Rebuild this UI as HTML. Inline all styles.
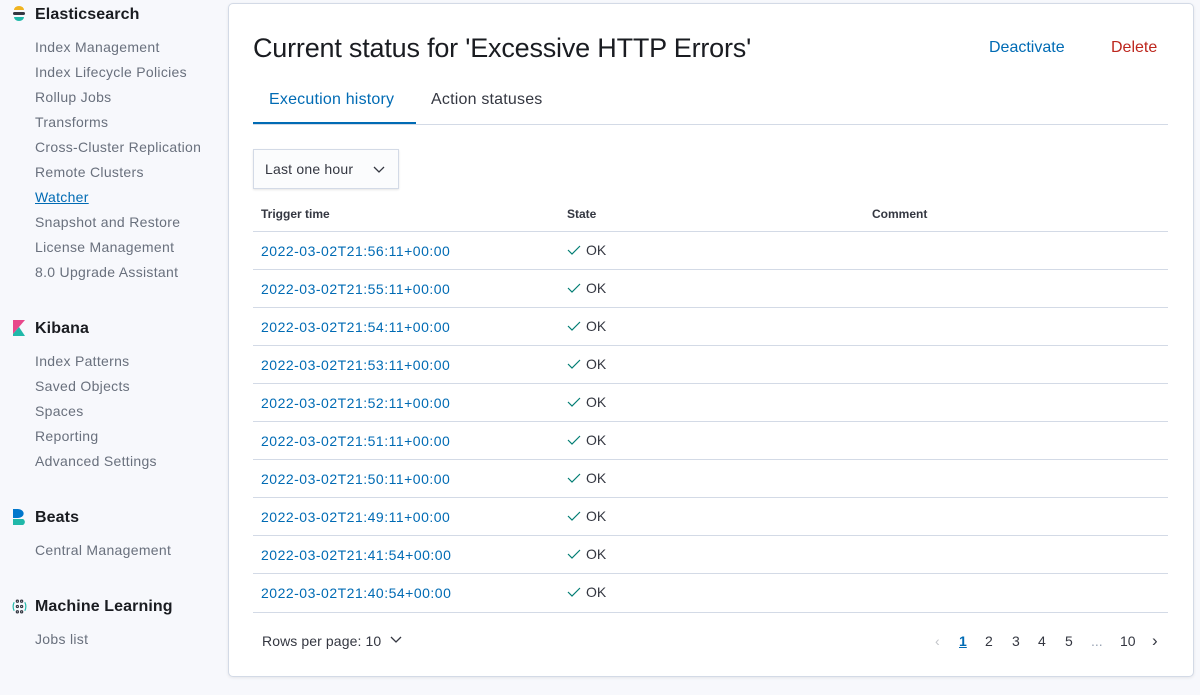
<!DOCTYPE html>
<html><head><style>
body{margin:0;width:1200px;height:695px;background:#f7f8fc;font-family:"Liberation Sans",sans-serif;position:relative;overflow:hidden;color:#343741}
.side{position:absolute;left:0;top:0;width:228px}
.h{position:absolute;left:35px;font-size:16px;font-weight:bold;color:#1a1c21;letter-spacing:0.1px}
.l{position:absolute;left:35px;font-size:14px;color:#69707d;letter-spacing:0.3px}
.ic{position:absolute;left:11px;width:16px;height:16px}
.panel{position:absolute;left:228px;top:3px;width:964px;height:672px;background:#fff;border:1px solid #d3dae6;border-radius:5px;box-shadow:0 1px 3px rgba(0,0,0,.08)}
.a{position:absolute;font-size:14px}
.row{position:absolute;left:24px;width:915px;height:38px;border-top:1px solid #d3dae6}
.row .t{position:absolute;left:8px;top:11px;font-size:14px;color:#006bb4;letter-spacing:0.5px}
.row .s{position:absolute;left:314px;top:10px;font-size:14px;color:#343741}
.row .s svg{vertical-align:-1px;margin-right:5px}
</style></head><body>
<div class="side">
<svg class="ic" style="top:6px" viewBox="0 0 14 16"><path d="M2 4a5 4 0 0 1 10 0z" fill="#f0b421"/><rect x="1" y="6" width="12" height="3" rx="1.5" fill="#343741"/><path d="M2 11h10a5 4 0 0 1-10 0z" fill="#20b8a9"/></svg>
<div class="h" style="top:6px">Elasticsearch</div>
<div class="l" style="top:39px">Index Management</div>
<div class="l" style="top:64px">Index Lifecycle Policies</div>
<div class="l" style="top:89px">Rollup Jobs</div>
<div class="l" style="top:114px">Transforms</div>
<div class="l" style="top:139px">Cross-Cluster Replication</div>
<div class="l" style="top:164px">Remote Clusters</div>
<div class="l" style="top:189px;color:#006bb4;text-decoration:underline">Watcher</div>
<div class="l" style="top:214px">Snapshot and Restore</div>
<div class="l" style="top:239px">License Management</div>
<div class="l" style="top:264px">8.0 Upgrade Assistant</div>
<svg class="ic" style="top:320px" viewBox="0 0 14 16"><path d="M1 0h12L1 14z" fill="#e8488b"/><path d="M1 14L7 7l6 9H1z" fill="#20b8a9"/></svg>
<div class="h" style="top:320px">Kibana</div>
<div class="l" style="top:353px">Index Patterns</div>
<div class="l" style="top:378px">Saved Objects</div>
<div class="l" style="top:403px">Spaces</div>
<div class="l" style="top:428px">Reporting</div>
<div class="l" style="top:453px">Advanced Settings</div>
<svg class="ic" style="top:509px" viewBox="0 0 14 16"><path d="M1 0h5a5 4 0 0 1 0 9H1z" fill="#0077cc"/><path d="M1 10h10a3 3 0 0 1-3 6H1z" fill="#20b8a9"/></svg>
<div class="h" style="top:509px">Beats</div>
<div class="l" style="top:542px">Central Management</div>
<svg class="ic" style="top:598px;width:17px;height:17px" viewBox="0 0 14 16" fill="none" stroke="#343741" stroke-width="1.1"><circle cx="5" cy="3" r="1"/><circle cx="9" cy="3" r="1"/><circle cx="5" cy="8" r="1"/><circle cx="9" cy="8" r="1"/><circle cx="5" cy="13" r="1"/><circle cx="9" cy="13" r="1"/><path d="M2 4Q0 8 2 12M12 4q2 4 0 8" stroke="#20b8a9"/></svg>
<div class="h" style="top:598px">Machine Learning</div>
<div class="l" style="top:631px">Jobs list</div>
</div>
<div class="panel">
<div class="a" style="left:24px;top:29px;font-size:27px;color:#1a1c21;letter-spacing:-0.2px">Current status for 'Excessive HTTP Errors'</div>
<div class="a" style="left:760px;top:35px;font-size:16px;color:#006bb4">Deactivate</div>
<div class="a" style="left:882px;top:35px;font-size:16px;color:#bd271e">Delete</div>
<div class="a" style="left:40px;top:87px;font-size:16px;color:#006bb4;letter-spacing:0.2px">Execution history</div>
<div class="a" style="left:202px;top:87px;font-size:16px;color:#343741;letter-spacing:0.2px">Action statuses</div>
<div style="position:absolute;left:24px;top:120px;width:915px;border-top:1px solid #d3dae6"></div>
<div style="position:absolute;left:24px;top:118px;width:163px;border-top:2px solid #006bb4"></div>
<div style="position:absolute;left:24px;top:145px;width:144px;height:38px;background:#fbfcfd;border:1px solid #d3dae6;box-shadow:0 1px 2px rgba(0,0,0,.1)"><span style="position:absolute;left:11px;top:11px;font-size:14px;letter-spacing:0.2px">Last one hour</span><svg style="position:absolute;left:118px;top:12px" width="14" height="14" viewBox="0 0 14 14"><path d="M2 5l5 5 5-5" fill="none" stroke="#343741" stroke-width="1.3"/></svg></div>
<div class="a" style="left:32px;top:203px;font-size:12px;font-weight:bold">Trigger time</div>
<div class="a" style="left:338px;top:203px;font-size:12px;font-weight:bold">State</div>
<div class="a" style="left:643px;top:203px;font-size:12px;font-weight:bold">Comment</div>
<div class="row" style="top:227px"><div class="t">2022-03-02T21:56:11+00:00</div><div class="s"><svg width="14" height="12" viewBox="0 0 14 12"><path d="M1 6l4 4 8-8" fill="none" stroke="#017d73" stroke-width="1.2"/></svg>OK</div></div>
<div class="row" style="top:265px"><div class="t">2022-03-02T21:55:11+00:00</div><div class="s"><svg width="14" height="12" viewBox="0 0 14 12"><path d="M1 6l4 4 8-8" fill="none" stroke="#017d73" stroke-width="1.2"/></svg>OK</div></div>
<div class="row" style="top:303px"><div class="t">2022-03-02T21:54:11+00:00</div><div class="s"><svg width="14" height="12" viewBox="0 0 14 12"><path d="M1 6l4 4 8-8" fill="none" stroke="#017d73" stroke-width="1.2"/></svg>OK</div></div>
<div class="row" style="top:341px"><div class="t">2022-03-02T21:53:11+00:00</div><div class="s"><svg width="14" height="12" viewBox="0 0 14 12"><path d="M1 6l4 4 8-8" fill="none" stroke="#017d73" stroke-width="1.2"/></svg>OK</div></div>
<div class="row" style="top:379px"><div class="t">2022-03-02T21:52:11+00:00</div><div class="s"><svg width="14" height="12" viewBox="0 0 14 12"><path d="M1 6l4 4 8-8" fill="none" stroke="#017d73" stroke-width="1.2"/></svg>OK</div></div>
<div class="row" style="top:417px"><div class="t">2022-03-02T21:51:11+00:00</div><div class="s"><svg width="14" height="12" viewBox="0 0 14 12"><path d="M1 6l4 4 8-8" fill="none" stroke="#017d73" stroke-width="1.2"/></svg>OK</div></div>
<div class="row" style="top:455px"><div class="t">2022-03-02T21:50:11+00:00</div><div class="s"><svg width="14" height="12" viewBox="0 0 14 12"><path d="M1 6l4 4 8-8" fill="none" stroke="#017d73" stroke-width="1.2"/></svg>OK</div></div>
<div class="row" style="top:493px"><div class="t">2022-03-02T21:49:11+00:00</div><div class="s"><svg width="14" height="12" viewBox="0 0 14 12"><path d="M1 6l4 4 8-8" fill="none" stroke="#017d73" stroke-width="1.2"/></svg>OK</div></div>
<div class="row" style="top:531px"><div class="t">2022-03-02T21:41:54+00:00</div><div class="s"><svg width="14" height="12" viewBox="0 0 14 12"><path d="M1 6l4 4 8-8" fill="none" stroke="#017d73" stroke-width="1.2"/></svg>OK</div></div>
<div class="row" style="top:569px;border-bottom:1px solid #d3dae6"><div class="t">2022-03-02T21:40:54+00:00</div><div class="s"><svg width="14" height="12" viewBox="0 0 14 12"><path d="M1 6l4 4 8-8" fill="none" stroke="#017d73" stroke-width="1.2"/></svg>OK</div></div>
<div class="a" style="left:33px;top:629px;letter-spacing:0.1px">Rows per page: 10 <svg width="14" height="12" viewBox="0 0 14 12" style="margin-left:4px"><path d="M2 3l5 5 5-5" fill="none" stroke="#343741" stroke-width="1.3"/></svg></div>
<div class="a" style="left:706px;top:629px;color:#c2c4c8">‹</div>
<div class="a" style="left:730px;top:629px;color:#006bb4;font-weight:bold;text-decoration:underline">1</div>
<div class="a" style="left:756px;top:629px">2</div>
<div class="a" style="left:783px;top:629px">3</div>
<div class="a" style="left:809px;top:629px">4</div>
<div class="a" style="left:836px;top:629px">5</div>
<div class="a" style="left:862px;top:629px;color:#98a2b3">...</div>
<div class="a" style="left:891px;top:629px">10</div>
<div class="a" style="left:923px;top:627px;font-size:17px">›</div>
</div>
</body></html>
